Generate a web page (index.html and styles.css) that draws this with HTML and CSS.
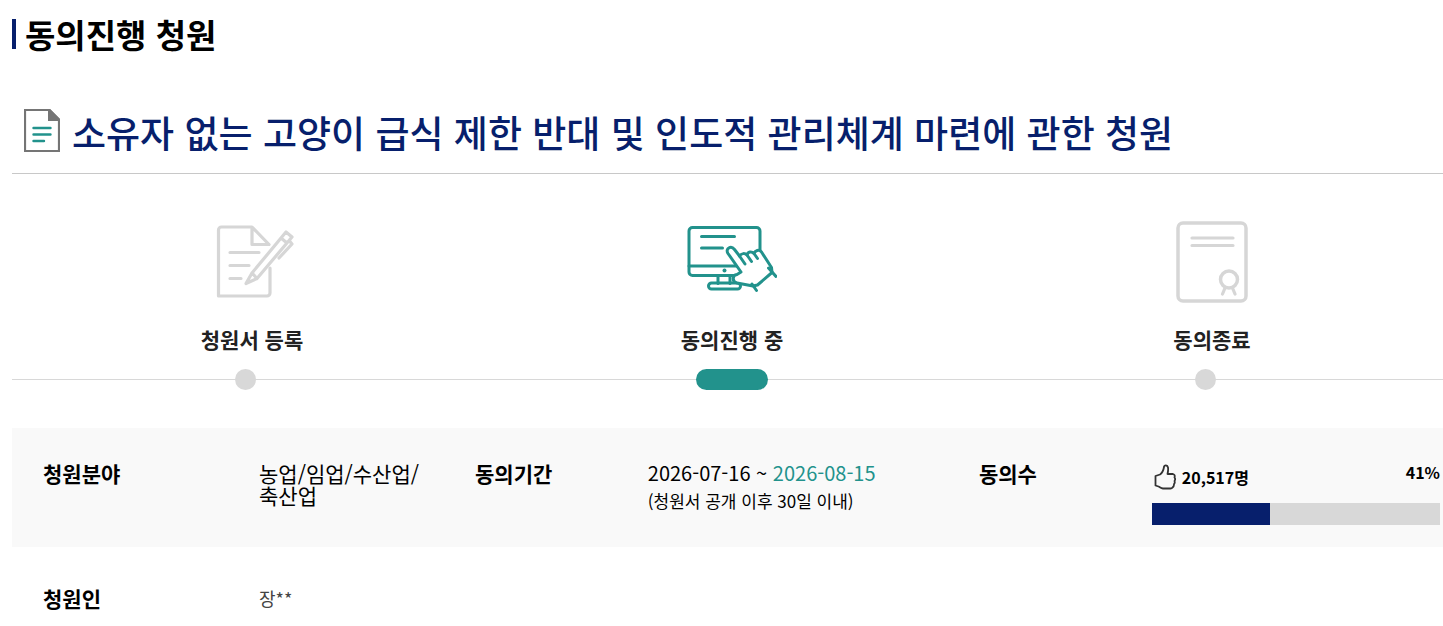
FILE: index.html
```html
<!DOCTYPE html>
<html lang="ko">
<head>
<meta charset="utf-8">
<meta name="viewport" content="width=device-width, initial-scale=1">
<title>동의진행 청원</title>
<link rel="stylesheet" href="styles.css">
</head>
<body>
<main class="page">
  <h1 class="page-title">동의진행 청원</h1>
  <header class="petition-head">
    <svg class="doc-icon" width="36" height="44" viewBox="0 0 36 44" fill="none" aria-hidden="true">
      <path d="M1 1h24.500l9.500 9.500V42H1z" stroke="#757575" stroke-width="2.200"/>
      <path d="M24 0h2l10 10v2H24z" fill="#757575"/>
      <path d="M9.500 19h17M9.500 25.500h17M9.500 32h10.500" stroke="#22928c" stroke-width="2.400" stroke-linecap="round"/>
    </svg>
    <h2 class="petition-title">소유자 없는 고양이 급식 제한 반대 및 인도적 관리체계 마련에 관한 청원</h2>
  </header>

  <ol class="steps">
    <li class="step">
      <svg class="step-icon" width="90" height="84" viewBox="0 0 90 84" fill="none" stroke="#d6d6d6" stroke-width="3.200" stroke-linecap="round" stroke-linejoin="round" aria-hidden="true">
        <path d="M63 48v25a3 3 0 0 1-3 3H11.500V10a3 3 0 0 1 3-3H45L62 24.500H45V8M23 32.500h29M23 45.500h19M23 58.500h11"/>
        <path d="M45 53l34-41 6 5-35 41.500-11 5zM45 53l5 5.500M74 18l6 5M82.500 21l2.500 3-13 14"/>
      </svg>
      <span class="step-label">청원서 등록</span>
      <span class="step-dot"></span>
    </li>
    <li class="step step-active" aria-current="step">
      <svg class="step-icon" width="90" height="84" viewBox="0 0 90 84" fill="none" stroke="#22928c" stroke-width="3" stroke-linecap="round" stroke-linejoin="round" aria-hidden="true">
        <rect x="2" y="7.500" width="71" height="48" rx="3.500"/>
        <path d="M2 46h48M14.500 16.500h33M14.500 28h21"/>
        <path d="M31 55.500v8M43 55.500v8"/>
        <rect x="21.500" y="63" width="32" height="6" rx="3"/>
        <path class="hand" d="M54 52L41 33.500c-3-5 3-8.500 6.500-4l5 6.500c2-3 5.500-3 7.500-1 1-3.500 4.500-4 7-1.500 1-3 5-4.500 7.500-1.500l10 15.500.500 5-14.500 12.500-4.500 1-16-3c-5-1-5-8 0-8.500z"/>
        <path d="M52.500 36l5.500 8M60 35l4.500 6.500M67 33.500l3.500 5M81.500 48l7.500 8.500M65 64l4.500 6.500"/>
        <circle cx="37.500" cy="50.500" r="2" fill="#22928c" stroke="none"/>
      </svg>
      <span class="step-label">동의진행 중</span>
      <span class="step-dot"></span>
    </li>
    <li class="step">
      <svg class="step-icon" width="90" height="84" viewBox="0 0 90 84" fill="none" stroke="#d6d6d6" stroke-width="3.500" stroke-linecap="round" stroke-linejoin="round" aria-hidden="true">
        <rect x="11" y="3" width="68" height="78" rx="5"/>
        <path d="M25 18h41M25 25.500h41M58 68l-2.500 6M65.500 68l2.500 6" stroke-width="3.200"/>
        <circle cx="62" cy="59.500" r="8.500"/>
      </svg>
      <span class="step-label">동의종료</span>
      <span class="step-dot"></span>
    </li>
  </ol>

  <table class="info">
    <colgroup>
      <col class="col-head-wide"><col class="col-field"><col class="col-head"><col class="col-value"><col class="col-head"><col class="col-value">
    </colgroup>
    <tbody>
      <tr class="info-summary">
        <th scope="row">청원분야</th>
        <td>농업/임업/수산업/축산업</td>
        <th scope="row">동의기간</th>
        <td>
          <p class="period">2026-07-16 ~ <span class="period-end">2026-08-15</span></p>
          <p class="period-note">(청원서 공개 이후 30일 이내)</p>
        </td>
        <th scope="row">동의수</th>
        <td>
          <div class="consent">
            <span class="consent-count">
              <svg width="22" height="26" viewBox="0 0 22 26" fill="none" stroke="#333" stroke-width="1.800" stroke-linejoin="round" aria-hidden="true">
                <path d="M1.500 12L6 10.500c3-2 3.500-4.500 4-7.500.300-2.500 3.500-2 4 .500.400 2.500 0 4.500-.500 6.500h5.500c1.800.500 2 2 1.500 3.500.800 1 .700 2.500 0 3.500.500 1.200.300 2.300-.500 3.200.100 1.500-.500 2.500-1.500 3.300-.500.800-1.200 1-2 1H9c-2-.200-3-1.300-4.500-2L1.500 21.500z"/>
              </svg>
              20,517명
            </span>
            <span class="consent-rate">41%</span>
          </div>
          <div class="bar" role="progressbar" aria-label="동의수" aria-valuenow="41" aria-valuemin="0" aria-valuemax="100">
            <div class="bar-fill" style="width: 41%"></div>
          </div>
        </td>
      </tr>
      <tr class="info-person">
        <th scope="row">청원인</th>
        <td colspan="5">장**</td>
      </tr>
    </tbody>
  </table>
</main>
</body>
</html>
```
FILE: styles.css
```css
* {
  box-sizing: border-box;
}

body {
  margin: 0;
  background: #fff;
  color: #000;
  font-family: "Noto Sans CJK KR", sans-serif;
  overflow-x: hidden;
}

h1, h2, p, ol {
  margin: 0;
  padding: 0;
}

.page {
  padding: 19px 0 0 12px;
  overflow: hidden;
}

.page-title {
  padding-left: 9px;
  border-left: 4px solid #071f6c;
  font-size: 33px;
  font-weight: 700;
  line-height: 30px;
}

.petition-head {
  display: flex;
  align-items: flex-start;
  gap: 12px;
  margin-top: 60px;
  padding: 0 12px 18px;
  border-bottom: 1px solid #c8c8c8;
}

.doc-icon {
  flex: none;
}

.petition-title {
  color: #071f6c;
  font-size: 37px;
  font-weight: 500;
  line-height: 46px;
}

/* The step track and the table run on under the window's right edge. */
.steps,
.info {
  width: calc(100% + 9px);
}

.steps {
  display: grid;
  grid-template-columns: repeat(3, 1fr);
  margin-top: 46px;
  list-style: none;
}

.step {
  display: flex;
  flex-direction: column;
  align-items: center;
  background: linear-gradient(#d8d8d8, #d8d8d8) 0 calc(100% - 10px) / 100% 1px no-repeat;
}

.hand {
  fill: #fff;
}

.step-label {
  margin: 20px 0 15px;
  color: #222;
  font-size: 21px;
  font-weight: 700;
  line-height: 30px;
}

.step-dot {
  width: 21px;
  height: 21px;
  margin-right: 13px;
  border-radius: 11px;
  background: #d8d8d8;
}

.step-active .step-dot {
  width: 72px;
  margin-right: 0;
  background: #22928c;
}

.info {
  margin-top: 38px;
  border-collapse: collapse;
  table-layout: fixed;
  font-size: 21px;
  line-height: 22px;
  word-break: keep-all;
}

.col-head-wide,
.col-field {
  width: 15%;
}

.col-head {
  width: 12%;
}

.col-value {
  width: 23%;
}

.info th,
.info td {
  padding: 34px 12px 22px 31px;
  text-align: left;
  vertical-align: top;
}

.info th {
  font-weight: 700;
}

.info-summary {
  background: #f9f9f9;
}

.period {
  font-size: 20px;
}

.period-end {
  color: #22928c;
}

.period-note {
  margin-top: 6px;
  font-size: 17px;
}

.consent {
  display: flex;
  justify-content: space-between;
  align-items: flex-start;
  font-size: 16px;
  font-weight: 700;
}

.consent-rate {
  line-height: 20px;
}

.consent-count {
  display: flex;
  align-items: center;
  gap: 6px;
  padding: 2px 0 0 2px;
}

.bar {
  margin-top: 13px;
  background: #d8d8d8;
}

.bar-fill {
  height: 22px;
  background: #071f6c;
}

.info .info-person td {
  padding-top: 40px;
  color: #444;
  font-size: 18px;
}

.info .info-person th {
  padding-top: 40px;
}
```
